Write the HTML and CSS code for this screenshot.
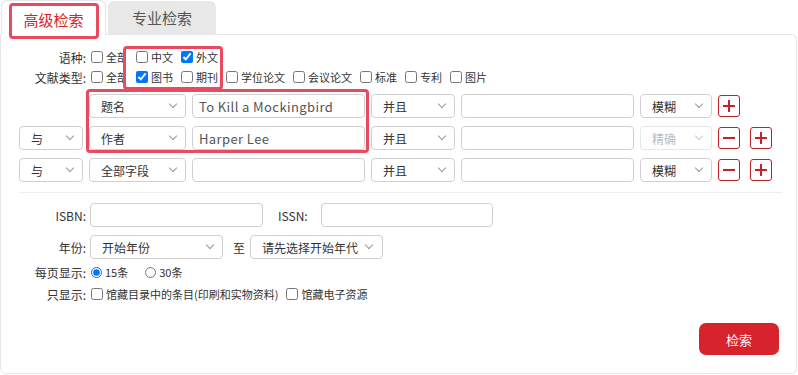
FILE: index.html
```html
<!DOCTYPE html>
<html>
  <head>
    <meta name="viewport" content="width=device-width,initial-scale=1.0" />
    <title>高级检索</title>
    <link rel="stylesheet" href="styles.css">
  </head>
  <body>
    <div class="tabs">
      <div class="tab active">高级检索</div>
      <div class="tab">专业检索</div>
    </div>

    <div class="panel">
      <div class="row check-row">
        <span class="label">语种:</span>
        <label class="opt"><input type="checkbox" />全部</label>
        <label class="opt top"><input type="checkbox" />中文</label>
        <label class="opt top"><input type="checkbox" checked />外文</label>
      </div>
      <div class="row check-row">
        <span class="label">文献类型:</span>
        <label class="opt"><input type="checkbox" />全部</label>
        <label class="opt top"><input type="checkbox" checked />图书</label>
        <label class="opt top"><input type="checkbox" />期刊</label>
        <label class="opt"><input type="checkbox" />学位论文</label>
        <label class="opt"><input type="checkbox" />会议论文</label>
        <label class="opt"><input type="checkbox" />标准</label>
        <label class="opt"><input type="checkbox" />专利</label>
        <label class="opt"><input type="checkbox" />图片</label>
      </div>

      <div class="conditions">
        <div class="cond">
          <span class="sel w-op blank"></span>
          <div class="sel w-field">题名<i class="arrow"></i></div>
          <div class="box w-input">To Kill a Mockingbird</div>
          <div class="sel w-and">并且<i class="arrow"></i></div>
          <div class="box w-input"></div>
          <div class="sel w-mode">模糊<i class="arrow"></i></div>
          <button class="sq plus"></button>
        </div>
        <div class="cond">
          <div class="sel w-op">与<i class="arrow"></i></div>
          <div class="sel w-field">作者<i class="arrow"></i></div>
          <div class="box w-input">Harper Lee</div>
          <div class="sel w-and">并且<i class="arrow"></i></div>
          <div class="box w-input"></div>
          <div class="sel w-mode disabled">精确<i class="arrow"></i></div>
          <button class="sq minus"></button>
          <button class="sq plus"></button>
        </div>
        <div class="cond">
          <div class="sel w-op">与<i class="arrow"></i></div>
          <div class="sel w-field">全部字段<i class="arrow"></i></div>
          <div class="box w-input"></div>
          <div class="sel w-and">并且<i class="arrow"></i></div>
          <div class="box w-input"></div>
          <div class="sel w-mode">模糊<i class="arrow"></i></div>
          <button class="sq minus"></button>
          <button class="sq plus"></button>
        </div>
      </div>

      <div class="divider"></div>

      <div class="row field-row">
        <span class="label">ISBN:</span>
        <div class="box w-isbn"></div>
        <span class="label-mid">ISSN:</span>
        <div class="box w-issn"></div>
      </div>
      <div class="row field-row">
        <span class="label">年份:</span>
        <div class="sel w-year">开始年份<i class="arrow"></i></div>
        <span class="to">至</span>
        <div class="sel w-year2">请先选择开始年代<i class="arrow"></i></div>
      </div>
      <div class="row check-row per-page">
        <span class="label">每页显示:</span>
        <label class="opt"><input type="radio" name="pp" checked />15条</label>
        <label class="opt"><input type="radio" name="pp" />30条</label>
      </div>
      <div class="row check-row">
        <span class="label">只显示:</span>
        <label class="opt"><input type="checkbox" />馆藏目录中的条目(印刷和实物资料)</label>
        <label class="opt"><input type="checkbox" />馆藏电子资源</label>
      </div>

      <div class="actions">
        <button class="search-btn">检索</button>
      </div>
    </div>

    <!-- highlight marks drawn over the page -->
    <div class="mark mark-tab"></div>
    <div class="mark mark-lang"></div>
    <div class="mark mark-fields"></div>
  </body>
</html>
```

FILE: styles.css
```css
body {
  margin: 0;
  position: relative;
  width: 798px;
  height: 375px;
  overflow: hidden;
  background: #fff;
  color: #333;
  font-family: "Noto Sans CJK SC", "Open Sans", sans-serif;
  font-size: 11px;
}

/* tabs */
.tabs {
  display: flex;
  align-items: flex-end;
  height: 34px;
  padding-left: 1px;
}
.tab {
  box-sizing: border-box;
  display: flex;
  align-items: center;
  justify-content: center;
  font-size: 15px;
  border-radius: 6px 6px 0 0;
}
.tab.active {
  position: relative;
  z-index: 2;
  width: 105px;
  height: 35px;
  margin-bottom: -1px;
  padding-top: 2px;
  background: #fff;
  border: 1px solid #e6e6e6;
  border-bottom: none;
  color: #d7232d;
}
.tab:not(.active) {
  width: 108px;
  height: 33px;
  margin-left: 2px;
  background: #e8e8e8;
  color: #555;
}

/* panel */
.panel {
  box-sizing: border-box;
  width: 797px;
  height: 340px;
  border: 1px solid #e6e6e6;
  border-radius: 0 6px 6px 6px;
  padding: 12px 17px 0 0;
}
.row {
  display: flex;
  align-items: center;
}
.label {
  width: 89px;
  padding-right: 4px;
  box-sizing: border-box;
  text-align: right;
  flex-shrink: 0;
  font-size: 12px;
}
.check-row {
  height: 20px;
}
.opt {
  display: inline-flex;
  align-items: center;
  margin-right: 7px;
  white-space: nowrap;
}
.opt.top {
  position: relative;
  z-index: 5;
}
.opt input {
  width: 12px;
  height: 12px;
  margin: 0 3px 0 1px;
}

/* search conditions */
.conditions {
  display: flex;
  flex-direction: column;
  gap: 8px;
  margin-top: 7px;
  padding-left: 18px;
}
.cond {
  display: flex;
  align-items: center;
  gap: 6px;
  height: 24px;
}
.sel, .box {
  box-sizing: border-box;
  height: 24px;
  border: 1px solid #d0d0d0;
  border-radius: 4px;
  display: flex;
  align-items: center;
  font-size: 12px;
  flex-shrink: 0;
}
.sel {
  justify-content: space-between;
  padding: 0 9px 0 11px;
  color: #333;
}
.sel.blank {
  border-color: transparent;
}
.sel.disabled {
  color: #bbb;
  border-color: #e6e6e6;
}
.arrow {
  width: 5px;
  height: 5px;
  border-right: 1px solid #999;
  border-bottom: 1px solid #999;
  transform: translateY(-2px) rotate(45deg);
}
.sel.disabled .arrow {
  border-color: #ccc;
}
.box {
  padding: 0 6px;
  color: #555;
  font-size: 13px;
  letter-spacing: 0.4px;
}
.w-op { width: 64px; }
.w-field { width: 97px; }
.w-input { width: 173px; }
.w-and { width: 84px; }
.w-mode { width: 72px; }
.sq {
  box-sizing: border-box;
  width: 22px;
  height: 22px;
  padding: 0;
  border: 1px solid #c0202a;
  border-radius: 3px;
  background: #fff;
  position: relative;
  flex-shrink: 0;
}
.sq + .sq {
  margin-left: 4px;
}
.sq::before, .plus::after {
  content: "";
  position: absolute;
  left: 4px;
  top: 9px;
  width: 12px;
  height: 2px;
  background: #c8202a;
}
.plus::after {
  left: 9px;
  top: 4px;
  width: 2px;
  height: 12px;
}

.divider {
  height: 1px;
  background: #eeeeee;
  margin: 10px 0 10px 18px;
  width: 763px;
}

/* bottom fields */
.field-row {
  height: 24px;
  margin-bottom: 8px;
}
.w-isbn { width: 173px; }
.w-issn { width: 172px; }
.label-mid {
  width: 43px;
  margin-left: 15px;
  font-size: 12px;
}
.w-year { width: 133px; }
.w-year2 { width: 133px; padding-right: 10px; }
.to {
  margin: 0 5px 0 10px;
  font-size: 12px;
}
.per-page {
  margin-top: -5px;
  margin-bottom: 2px;
}
.per-page .opt {
  margin-right: 16px;
}
.per-page .opt input {
  width: 11px;
  height: 11px;
  margin: 0 3px 0 1px;
}

.actions {
  display: flex;
  justify-content: flex-end;
  margin-top: 19px;
}
.search-btn {
  width: 80px;
  height: 32px;
  border: none;
  border-radius: 7px;
  background: #d7232b;
  color: #fff;
  font-family: inherit;
  font-size: 13px;
}

/* highlight marks */
.mark {
  position: absolute;
  box-sizing: border-box;
  border: 3px solid #ea4a5f;
  border-radius: 4px;
  z-index: 4;
}
.mark-tab {
  left: 9px;
  top: 3px;
  width: 90px;
  height: 36px;
}
.mark-lang {
  left: 123px;
  top: 46px;
  width: 100px;
  height: 44px;
  background: #fff;
}
.mark-fields {
  left: 86px;
  top: 89px;
  width: 283px;
  height: 64px;
}
```
